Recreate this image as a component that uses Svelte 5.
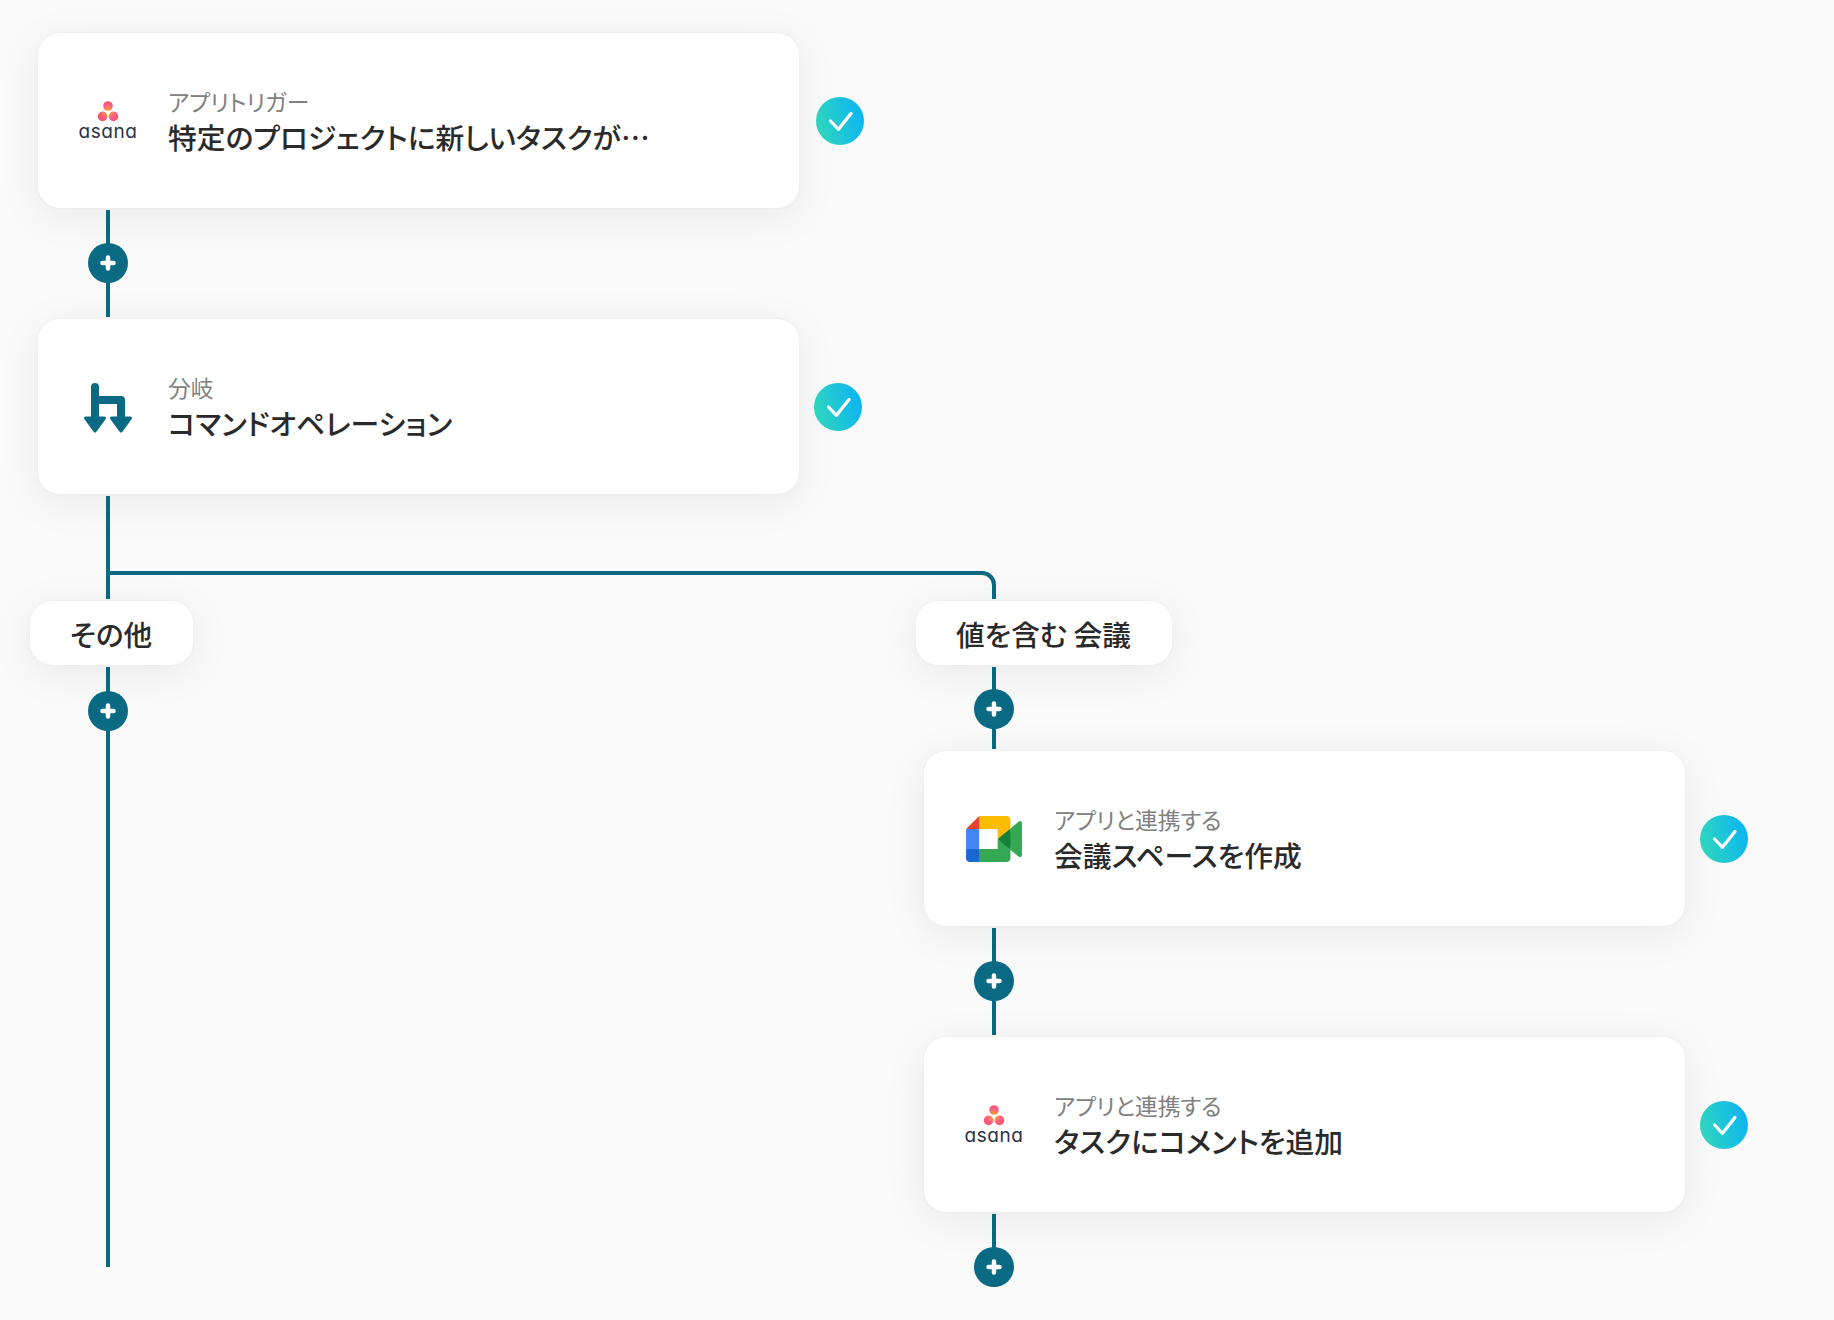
<script>
  const asanaId = 'asana-glow';
</script>

{#snippet asana()}
  <div class="logo logo--asana">
    <svg width="30" height="22" viewBox="0 0 30 22">
      <circle cx="15" cy="6" r="4.800" fill="url(#{asanaId})" />
      <circle cx="9.600" cy="16.400" r="4.800" fill="url(#{asanaId})" />
      <circle cx="20.400" cy="16.400" r="4.800" fill="url(#{asanaId})" />
    </svg>
    <span class="wordmark">asana</span>
  </div>
{/snippet}

{#snippet meet()}
  <div class="logo">
    <svg width="56" height="46" viewBox="0 0 87.5 72">
      <path fill="#188038" d="M49.5 36l8.530 9.750 11.470 7.330 2-17.020-2-16.640-11.690 6.440z" />
      <path fill="#1967d2" d="M0 51.500V66c0 3.315 2.685 6 6 6h14.500l3-10.960-3-9.540-9.950-3z" />
      <path fill="#ea4335" d="M20.500 0L0 20.500l10.550 3 9.950-3 2.950-9.410z" />
      <path fill="#4285f4" d="M20.500 20.500H0v31h20.500z" />
      <path fill="#34a853" d="M82.600 8.680L69.500 19.420v33.660l13.160 10.790c1.970 1.540 4.850.135 4.850-2.370V11c0-2.535-2.945-3.925-4.910-2.320zM49.5 36v15.500h-29V72h43c3.315 0 6-2.685 6-6V53.080z" />
      <path fill="#fbbc04" d="M63.500 0h-43v20.500h29V36l20-16.570V6c0-3.315-2.685-6-6-6z" />
    </svg>
  </div>
{/snippet}

{#snippet branch()}
  <div class="logo">
    <svg width="56" height="56" viewBox="0 0 56 56" fill="#0a6a84">
      <path d="M15 8v32M15 21h26v19" fill="none" stroke="#0a6a84" stroke-width="8" stroke-linecap="round" stroke-linejoin="round" />
      <path d="M5.500 39h19L15 52zM31.500 39h19L41 52z" stroke="#0a6a84" stroke-width="3" stroke-linejoin="round" />
    </svg>
  </div>
{/snippet}

{#snippet plus()}
  <button class="plus" aria-label="追加">
    <svg width="16" height="16" viewBox="0 0 16 16">
      <path d="M8 2.500v11M2.500 8h11" stroke="#fff" stroke-width="4.500" stroke-linecap="round" />
    </svg>
  </button>
{/snippet}

{#snippet step(icon, sub, title, gap)}
  <div class="step">
    <div class="card">
      {@render icon()}
      <div class="copy">
        <p class="sub">{sub}</p>
        <p class="title">{title}</p>
      </div>
    </div>
    <div class="check" style="margin-left: {gap}px">
      <svg width="48" height="48" viewBox="0 0 48 48">
        <path d="M14.500 24l8 8.300L35 16.500" fill="none" stroke="#fff" stroke-width="3.200" stroke-linecap="round" stroke-linejoin="round" />
      </svg>
    </div>
  </div>
{/snippet}

<svg class="defs" width="0" height="0" aria-hidden="true">
  <defs>
    <radialGradient id={asanaId} gradientUnits="userSpaceOnUse" cx="15" cy="12" r="12">
      <stop offset="0" stop-color="#ffb900" />
      <stop offset="0.6" stop-color="#f95d8f" />
      <stop offset="1" stop-color="#f95353" />
    </radialGradient>
  </defs>
</svg>

<main class="flow">
  {@render step(asana, 'アプリトリガー', '特定のプロジェクトに新しいタスクが…', 17)}
  <div class="line line--mid">{@render plus()}</div>
  {@render step(branch, '分岐', 'コマンドオペレーション', 15)}

  <div class="fork"><div class="elbow"></div></div>

  <div class="arms">
    <section class="arm">
      <div class="label">その他</div>
      <div class="line line--tail">{@render plus()}</div>
    </section>

    <section class="arm">
      <div class="label">値を含む 会議</div>
      <div class="line line--head">{@render plus()}</div>
      {@render step(meet, 'アプリと連携する', '会議スペースを作成', 15)}
      <div class="line line--mid">{@render plus()}</div>
      {@render step(asana, 'アプリと連携する', 'タスクにコメントを追加', 15)}
      <div class="line line--end">{@render plus()}</div>
    </section>
  </div>
</main>

<style>
  :global(body) {
    background-color: #fafafa;
    font-family: "Noto Sans CJK JP", "Noto Sans", sans-serif;
    font-feature-settings: "palt";
  }

  .defs {
    position: absolute;
  }

  .flow {
    padding: 33px 0 0 30px;
    height: 1320px;
    box-sizing: border-box;
    overflow: hidden;
  }

  .step {
    display: flex;
    align-items: center;
    margin-left: 8px;
  }

  .card {
    width: 761px;
    height: 175px;
    box-sizing: border-box;
    display: flex;
    align-items: center;
    gap: 32px;
    padding-left: 42px;
    background-color: #fff;
    border-radius: 22px;
    box-shadow: 0 8px 44px rgba(0, 0, 0, 0.07), 0 0 3px rgba(0, 0, 0, 0.05);
  }

  .logo {
    width: 56px;
    display: flex;
    flex-direction: column;
    align-items: center;
    flex-shrink: 0;
  }

  .wordmark {
    font-family: "Inter", sans-serif;
    font-feature-settings: "cv11";
    font-size: 19px;
    font-weight: 400;
    line-height: 20px;
    color: #2b3245;
    letter-spacing: 0.6px;
  }

  .copy {
    padding-top: 3px;
  }

  .copy p {
    margin: 0;
  }

  .sub {
    font-size: 22.8px;
    line-height: 30px;
    color: #808080;
  }

  .title {
    font-size: 28.8px;
    line-height: 40px;
    font-weight: 500;
    color: #2a2a2a;
    margin-top: 7px;
  }

  .check {
    width: 48px;
    height: 48px;
    border-radius: 50%;
    background: linear-gradient(75deg, #30d8bb 5%, #0db5f2 90%);
  }

  .check svg {
    display: block;
  }

  .line {
    width: 4px;
    margin: 2px 0 2px 76px;
    background-color: #0a6a84;
    display: flex;
    flex-direction: column;
    align-items: center;
    justify-content: center;
  }

  .line--mid {
    height: 107px;
    padding-bottom: 1px;
    box-sizing: border-box;
  }

  .line--head {
    height: 82px;
    padding-top: 2px;
    box-sizing: border-box;
  }

  .line--tail {
    height: 600px;
    justify-content: flex-start;
    padding-top: 24px;
    box-sizing: border-box;
  }

  .line--end {
    height: 54px;
    justify-content: flex-start;
    padding-top: 33px;
    box-sizing: border-box;
  }

  .plus {
    width: 40px;
    height: 40px;
    flex-shrink: 0;
    padding: 0;
    border: 0;
    border-radius: 50%;
    background-color: #0a6a84;
    display: flex;
    align-items: center;
    justify-content: center;
  }

  .fork {
    height: 103px;
    margin: 2px 0 2px 76px;
    border-left: 4px solid #0a6a84;
    display: flex;
    align-items: flex-end;
  }

  .elbow {
    width: 882px;
    height: 24px;
    border-top: 4px solid #0a6a84;
    border-right: 4px solid #0a6a84;
    border-top-right-radius: 14px;
  }

  .arms {
    display: grid;
    grid-template-columns: 886px 1fr;
  }

  .label {
    display: inline-block;
    height: 64px;
    padding: 0 41px 0 40px;
    font-size: 28.7px;
    line-height: 66px;
    font-weight: 500;
    color: #2a2a2a;
    background-color: #fff;
    border-radius: 22px;
    box-shadow: 0 8px 44px rgba(0, 0, 0, 0.07), 0 0 3px rgba(0, 0, 0, 0.05);
    vertical-align: top;
    position: relative;
  }
</style>
